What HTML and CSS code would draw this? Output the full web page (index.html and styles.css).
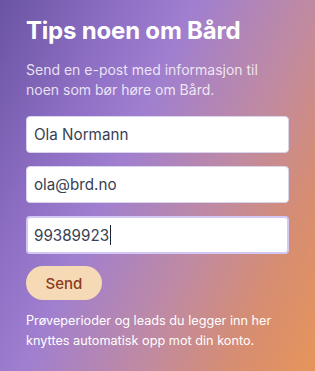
FILE: index.html
```html
<!DOCTYPE html>
<html lang="no">
<head>
    <meta charset="UTF-8">
    <meta name="viewport" content="width=device-width, initial-scale=1.0">
    <title>Tips noen om Bård</title>
    <link rel="stylesheet" href="styles.css">
</head>
<body>
    <div class="panel">
        <h1>Tips noen om Bård</h1>
        <p class="intro">Send en e-post med informasjon til noen som bør høre om Bård.</p>

        <form class="tip-form" onsubmit="return false">
            <input class="field" type="text" value="Ola Normann">
            <input class="field" type="email" value="ola@brd.no">
            <div class="field-wrap">
                <input class="field field-active" type="tel" value="99389923">
                <span class="caret"></span>
            </div>
            <button class="send-button" type="submit">Send</button>
        </form>

        <p class="note">Prøveperioder og leads du legger inn her knyttes automatisk opp mot din konto.</p>
    </div>
</body>
</html>
```

FILE: styles.css
```css
html, body {
    margin: 0;
    height: 100%;
}

body {
    font-family: Inter, "Noto Sans", sans-serif;
    background: linear-gradient(115deg, #6a54a3 0%, #8e6fc4 25%, #a07fd0 40%, #c08aa2 64%, #d68d72 82%, #e6955a 100%);
    color: #ffffff;
}

.panel {
    padding: 15px 26px 20px 26px;
}

h1 {
    font-size: 24px;
    font-weight: 700;
    line-height: 32px;
    margin: 0 0 13px 0;
    letter-spacing: -0.2px;
}

.intro {
    font-size: 14px;
    line-height: 20px;
    margin: 0 0 16px 0;
    color: rgba(255, 255, 255, 0.82);
}

.tip-form {
    display: flex;
    flex-direction: column;
    align-items: flex-start;
    gap: 13px;
}

.field {
    box-sizing: border-box;
    width: 263px;
    height: 37px;
    padding: 0 7px;
    border: 1px solid #d8d4ec;
    border-radius: 4px;
    background-color: #ffffff;
    font-family: Inter, "Noto Sans", sans-serif;
    font-size: 15.2px;
    color: #384152;
    outline: none;
}

.field-wrap {
    position: relative;
}

.field-active {
    display: block;
    height: 38px;
    border: 2px solid #d3c8f3;
    padding: 0 6px;
}

.caret {
    position: absolute;
    left: 84px;
    top: 9px;
    width: 1px;
    height: 20px;
    background-color: #1f2433;
}

.send-button {
    margin-top: -1px;
    width: 76px;
    height: 34px;
    border: none;
    border-radius: 17px;
    background-color: #f6dab6;
    color: #8a3b22;
    font-family: Inter, "Noto Sans", sans-serif;
    font-size: 15px;
    font-weight: 500;
    cursor: pointer;
}

.note {
    font-size: 12.7px;
    line-height: 20px;
    margin: 11px 0 0 0;
}
```
